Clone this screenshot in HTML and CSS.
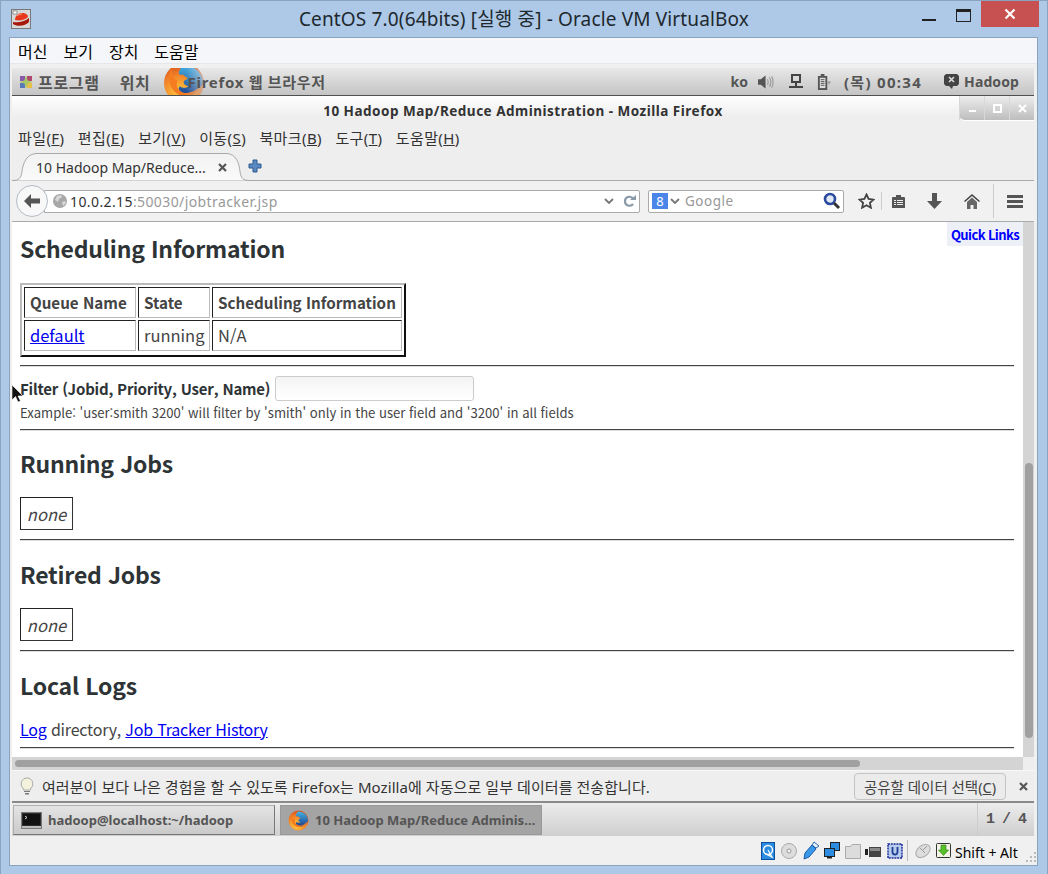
FILE: index.html
```html
<!DOCTYPE html>
<html lang="ko">
<head>
    <meta charset="utf-8">
    <title>CentOS 7.0(64bits) [실행 중] - Oracle VM VirtualBox</title>
    <link rel="stylesheet" href="styles.css">
</head>
<body>
    <svg class="defs" width="0" height="0">
        <defs>
            <radialGradient id="fx-orange" cx="0.4" cy="0.75" r="0.8">
                <stop offset="0" stop-color="#ffd040"/>
                <stop offset="0.55" stop-color="#f2842a"/>
                <stop offset="1" stop-color="#d0481c"/>
            </radialGradient>
            <linearGradient id="fx-blue" x1="0" y1="0" x2="0" y2="1">
                <stop offset="0" stop-color="#44b0e4"/>
                <stop offset="1" stop-color="#1c3f8c"/>
            </linearGradient>
            <symbol id="firefox" viewBox="0 0 40 40">
                <circle cx="20" cy="20" r="19" fill="url(#fx-orange)"/>
                <path d="M20 3c9 0 17 7 18 15 .5 6-3 5-6 9-3 5-9 6-13 4-4-2-5-6-3-8 3 2 6 2 8 0-3-1-5-2-4-5 1-1 4-1 3-3-2-1-3-2-4-3-2 1-4 0-4-2 1-3 3-7 5-7z" fill="url(#fx-blue)"/>
                <path d="M8 6c-1 3-3 7-2 11 1 11 10 18 19 15 4-1 7-4 8-7-4 4-11 6-16 3-4-3-5-7-3-11-3 1-5-2-6-11z" fill="#f57c20"/>
            </symbol>
            <symbol id="chevron" viewBox="0 0 10 6">
                <path d="M1 1l4 4 4-4" fill="none" stroke="#777" stroke-width="1.8"/>
            </symbol>
        </defs>
    </svg>

    <header class="vbox-title">
        <svg class="vbox-logo" width="20" height="20" viewBox="0 0 20 20">
            <rect x="0.5" y="0.5" width="19" height="19" fill="#d8d8d8" stroke="#777"/>
            <path d="M2 13c5 1 11 0 16-4l0 4c-3 4-12 5-16 2z" fill="#a81808"/>
            <path d="M4 11c0-4 3-7 7-7 4 0 6 2 6 4-3 3-8 4-13 3z" fill="#e8381c"/>
            <path d="M6 7c1-1 3-2 5-2" fill="none" stroke="#f8a080"/>
            <rect x="2" y="2" width="4" height="3" fill="#fff" stroke="#444" stroke-width="0.5"/>
        </svg>
        <h1 class="vbox-name">CentOS 7.0(64bits) [실행 중] - Oracle VM VirtualBox</h1>
        <div class="vbox-controls">
            <span class="ctl-min"></span>
            <span class="ctl-max"></span>
            <span class="ctl-close">
                <svg width="12" height="12" viewBox="0 0 12 12"><path d="M1.5 1.5l9 9M10.5 1.5l-9 9" stroke="#fff" stroke-width="2.2"/></svg>
            </span>
        </div>
    </header>

    <div class="vbox-body">
        <nav class="vm-menu">
            <span>머신</span><span>보기</span><span>장치</span><span>도움말</span>
        </nav>

        <div class="guest">
            <div class="gnome-panel">
                <svg class="foot" width="14" height="14" viewBox="0 0 14 14">
                    <rect x="1" y="1" width="5" height="5" fill="#8a5aa8"/>
                    <rect x="8" y="1" width="5" height="5" fill="#b04a6c"/>
                    <rect x="1" y="8" width="5" height="5" fill="#5a78b8"/>
                    <rect x="8" y="8" width="5" height="5" fill="#e4c04a"/>
                    <path d="M7 0l2 7-2 7-2-7zM0 7l7-2 7 2-7 2z" fill="#a8c868"/>
                </svg>
                <span class="panel-item apps">프로그램</span>
                <span class="panel-item places">위치</span>
                <svg class="panel-logo" width="42" height="42"><use href="#firefox"/></svg>
                <span class="panel-item app-name">Firefox 웹 브라우저</span>

                <div class="panel-right">
                    <span class="panel-item lang">ko</span>
                    <svg class="p-vol" width="17" height="14" viewBox="0 0 18 14">
                        <path d="M0 4h3l5-4v14l-5-4H0z" fill="#555"/>
                        <path d="M10 4c1 2 1 4 0 6M12 2c2 3 2 7 0 10M14.500 1c2 4 2 8 0 12" fill="none" stroke="#999" stroke-width="1.200"/>
                    </svg>
                    <svg class="p-net" width="14" height="16" viewBox="0 0 14 16">
                        <path d="M2 0h10v9H2zM4 2v5h6V2z" fill="#444" fill-rule="evenodd"/>
                        <path d="M6 9h2v3h6v2H0v-2h6z" fill="#444"/>
                    </svg>
                    <svg class="p-bat" width="14" height="16" viewBox="0 0 15 17">
                        <path d="M4 0h4v2h3v15H1V2h3z" fill="#555"/>
                        <path d="M3 4h6v11H3z" fill="#ddd"/>
                        <path d="M4 6h4M4 8h4M4 10h4M4 12h4" stroke="#555"/>
                        <path d="M12 8l3 0-3 5 1-3h-2z" fill="#999"/>
                    </svg>
                    <span class="panel-item clock">(목) 00:34</span>
                    <svg class="p-chat" width="15" height="15" viewBox="0 0 15 15">
                        <path d="M2 0h11l2 2v8l-2 2H9l-1 3-3-3H2L0 10V2z" fill="#444"/>
                        <path d="M5 3l5 5M10 3l-5 5" stroke="#ddd" stroke-width="1.600"/>
                    </svg>
                    <span class="panel-item user">Hadoop</span>
                </div>
            </div>

            <div class="ff-title">
                <span class="ff-name">10 Hadoop Map/Reduce Administration - Mozilla Firefox</span>
                <div class="ff-controls">
                    <span class="ff-btn"><i class="g-min"></i></span>
                    <span class="ff-btn"><i class="g-max"></i></span>
                    <span class="ff-btn">
                        <svg width="9" height="9" viewBox="0 0 9 9"><path d="M1 1l7 7M8 1l-7 7" stroke="#fff" stroke-width="2"/></svg>
                    </span>
                </div>
            </div>

            <nav class="ff-menu">
                <span>파일(<u>F</u>)</span><span>편집(<u>E</u>)</span><span>보기(<u>V</u>)</span><span>이동(<u>S</u>)</span><span>북마크(<u>B</u>)</span><span>도구(<u>T</u>)</span><span>도움말(<u>H</u>)</span>
            </nav>

            <div class="ff-tabs">
                <div class="ff-tab">
                    <svg class="tab-shape" width="238" height="30" viewBox="0 0 238 30">
                        <defs>
                            <linearGradient id="tab-fill" x1="0" y1="0" x2="0" y2="1">
                                <stop offset="0" stop-color="#f2f2f2"/>
                                <stop offset="1" stop-color="#fafafa"/>
                            </linearGradient>
                        </defs>
                        <path d="M0 29.500c7 0 9-2 10-9 1-9 5-18 15-18h189c10 0 13 9 14 18 1 7 3 9 10 9" fill="url(#tab-fill)" stroke="#aaa"/>
                    </svg>
                    <span class="tab-label">10 Hadoop Map/Reduce...</span>
                    <svg class="tab-close" width="9" height="9" viewBox="0 0 9 9"><path d="M1 1l7 7M8 1l-7 7" stroke="#555" stroke-width="2.200"/></svg>
                </div>
                <svg class="tab-new" width="14" height="14" viewBox="0 0 14 14">
                    <path d="M5 1h4v4h4v4H9v4H5V9H1V5h4z" fill="#5a88c0" stroke="#2c5a94"/>
                </svg>
            </div>

            <div class="ff-nav">
                <div class="back-btn">
                    <svg width="16" height="14" viewBox="0 0 16 14"><path d="M7 0L0 7l7 7V9.500h9v-5H7z" fill="#555"/></svg>
                </div>
                <div class="url-bar">
                    <svg class="globe" width="14" height="14" viewBox="0 0 14 14">
                        <circle cx="7" cy="7" r="7" fill="#a8a8a8"/>
                        <path d="M4 2l4-1 1 2-3 2-1 3-3-2zM9 8l3-1 1 2-3 3z" fill="#d8d8d8"/>
                    </svg>
                    <span class="url"><b>10.0.2.15</b>:50030/jobtracker.jsp</span>
                    <svg class="url-drop" width="10" height="6"><use href="#chevron"/></svg>
                    <svg class="url-reload" width="13" height="12" viewBox="0 0 13 12">
                        <path d="M10 3.500A4.500 4.500 0 1 0 10 9" fill="none" stroke="#8a9aa8" stroke-width="2.200"/>
                        <path d="M7 5h6V0z" fill="#8a9aa8"/>
                    </svg>
                </div>
                <div class="search-bar">
                    <span class="engine">8</span>
                    <svg class="engine-drop" width="10" height="6"><use href="#chevron"/></svg>
                    <span class="search-hint">Google</span>
                    <svg class="mag" width="18" height="18" viewBox="0 0 18 18">
                        <circle cx="7" cy="7" r="5" fill="#dfe8f4" stroke="#2a4a9c" stroke-width="2.600"/>
                        <path d="M11 11l5 5" stroke="#333" stroke-width="3"/>
                    </svg>
                </div>
                <div class="nav-tools">
                    <svg class="t-star" width="17" height="16" viewBox="0 0 17 16"><path d="M8.500 1.500l2.100 4.500 4.900.6-3.600 3.300 1 4.800-4.400-2.500-4.400 2.500 1-4.800L1.500 6.600l4.900-.6z" fill="none" stroke="#444" stroke-width="1.800"/></svg>
                    <i class="t-sep"></i>
                    <svg class="t-clip" width="15" height="15" viewBox="0 0 15 15">
                        <path d="M5 1h5v2h3a1 1 0 0 1 1 1v10H1V4a1 1 0 0 1 1-1h3z" fill="#555"/>
                        <path d="M3 6h2v1H3zM6 6h6v1H6zM3 8h2v1H3zM6 8h6v1H6zM3 10h2v1H3zM6 10h6v1H6z" fill="#eee"/>
                    </svg>
                    <svg class="t-down" width="15" height="16" viewBox="0 0 15 16"><path d="M5 0h5v8h5l-7.500 8L0 8h5z" fill="#555"/></svg>
                    <svg class="t-home" width="16" height="15" viewBox="0 0 16 15"><path d="M8 0l8 7-1 1-7-6-7 6-1-1z" fill="#444"/><path d="M8 3.500l5 4.500v7H9.500v-4h-3v4H3V8z" fill="#666"/></svg>
                    <i class="t-sep tall"></i>
                    <div class="t-menu"><i></i><i></i><i></i></div>
                </div>
            </div>

            <div class="viewport">
                <main class="page">
                    <a class="quick-links">Quick Links</a>

                    <h2>Scheduling Information</h2>
                    <table class="queues">
                        <tr>
                            <th class="c-name">Queue Name</th>
                            <th class="c-state">State</th>
                            <th>Scheduling Information</th>
                        </tr>
                        <tr>
                            <td><a href="#">default</a></td>
                            <td>running</td>
                            <td>N/A</td>
                        </tr>
                    </table>
                    <hr class="after-table">

                    <form class="filter">
                        <label for="filter">Filter (Jobid, Priority, User, Name)</label>
                        <input type="text" id="filter">
                    </form>
                    <p class="hint">Example: 'user:smith 3200' will filter by 'smith' only in the user field and '3200' in all fields</p>
                    <hr>

                    <h2>Running Jobs</h2>
                    <div class="none-box">none</div>
                    <hr class="after-none">

                    <h2>Retired Jobs</h2>
                    <div class="none-box">none</div>
                    <hr class="after-none">

                    <h2>Local Logs</h2>
                    <p class="logs"><a href="#">Log</a> directory, <a href="#">Job Tracker History</a></p>
                    <hr class="after-logs">
                </main>
                <div class="v-scroll"><i></i></div>
            </div>
            <div class="h-scroll"><div class="h-track"><i></i></div><div class="h-corner"></div></div>

            <div class="notice">
                <svg class="bulb" width="14" height="18" viewBox="0 0 14 18">
                    <path d="M7 1a6 6 0 0 1 3.500 10.800V13h-7v-1.200A6 6 0 0 1 7 1z" fill="#f4f2dc" stroke="#aaa"/>
                    <path d="M4 14h6v1H4zM5 16h4v1.500H5z" fill="#777"/>
                </svg>
                <span class="notice-text">여러분이 보다 나은 경험을 할 수 있도록 Firefox는 Mozilla에 자동으로 일부 데이터를 전송합니다.</span>
                <button class="notice-btn" type="button">공유할 데이터 선택(<u>C</u>)</button>
                <svg class="notice-close" width="9" height="9" viewBox="0 0 9 9"><path d="M1 1l7 7M8 1l-7 7" stroke="#555" stroke-width="2.200"/></svg>
            </div>

            <div class="taskbar">
                <div class="task">
                    <svg width="21" height="17" viewBox="0 0 21 17">
                        <rect x="0.500" y="0.500" width="20" height="16" fill="#2c2c2c" stroke="#777"/>
                        <rect x="2" y="2" width="17" height="11" fill="#111"/>
                        <path d="M4 4l2 1.500L4 7" fill="none" stroke="#ddd"/>
                        <path d="M1 14h19v2H1z" fill="#bbb"/>
                    </svg>
                    <span>hadoop@localhost:~/hadoop</span>
                </div>
                <div class="task active">
                    <svg width="21" height="21"><use href="#firefox"/></svg>
                    <span>10 Hadoop Map/Reduce Adminis…</span>
                </div>
                <div class="pager">1 / 4</div>
            </div>
        </div>

        <footer class="vm-status">
            <svg class="s-hd" width="14" height="18" viewBox="0 0 14 18">
                <rect x="0.500" y="0.500" width="13" height="17" fill="#2c8ce0" stroke="#0c4ea0"/>
                <circle cx="7" cy="8" r="4.500" fill="none" stroke="#fff" stroke-width="1.500"/>
                <path d="M7 8l4 7-6-3" fill="none" stroke="#fff" stroke-width="1.200"/>
            </svg>
            <svg class="s-cd" width="16" height="16" viewBox="0 0 16 16">
                <circle cx="8" cy="8" r="7.500" fill="#ddd" stroke="#aaa"/>
                <circle cx="8" cy="8" r="2" fill="#f4f4f4" stroke="#999"/>
            </svg>
            <svg class="s-usb" width="17" height="19" viewBox="0 0 17 19">
                <path d="M11 1l5 4-3 2-4-3z" fill="#e8f0f8" stroke="#2a6ab0"/>
                <path d="M9 4l4 4-7 8-5 2 1-6z" fill="#3a98e8" stroke="#1a5aa8"/>
            </svg>
            <svg class="s-net" width="16" height="17" viewBox="0 0 16 17">
                <rect x="6.500" y="0.500" width="9" height="8" fill="#2c8ce0" stroke="#222"/>
                <rect x="0.500" y="6.500" width="10" height="8" fill="#2c8ce0" stroke="#222"/>
                <path d="M3 15h5v1.500H3z" fill="#222"/>
            </svg>
            <svg class="s-folder" width="16" height="15" viewBox="0 0 16 15">
                <path d="M.5 2.500h5l1.500-2h8.500v14H.5z" fill="#dcdcdc" stroke="#aaa"/>
            </svg>
            <svg class="s-cam" width="16" height="12" viewBox="0 0 16 12">
                <rect x="4" y="1" width="12" height="10" fill="#444"/>
                <rect x="5" y="2" width="10" height="3" fill="#888"/>
                <path d="M0 3h3v6H0z" fill="#222"/>
            </svg>
            <svg class="s-chip" width="16" height="16" viewBox="0 0 16 16">
                <rect x="1" y="1" width="14" height="14" fill="#b8ccec" stroke="#1c2c98" stroke-width="1.500" stroke-dasharray="2 0.800"/>
                <path d="M5.500 4v5a2.500 2.500 0 0 0 5 0V4" fill="none" stroke="#1c3c98" stroke-width="1.800"/>
            </svg>
            <i class="s-sep"></i>
            <svg class="s-mouse" width="16" height="16" viewBox="0 0 16 16">
                <ellipse cx="8" cy="8" rx="8" ry="5.500" transform="rotate(-40 8 8)" fill="#ddd" stroke="#aaa"/>
                <path d="M5 5l5 5M12 3L8 7" stroke="#999"/>
            </svg>
            <svg class="s-key" width="15" height="15" viewBox="0 0 15 15">
                <rect x="0.500" y="0.500" width="14" height="14" rx="1" fill="#f4f4e4" stroke="#333"/>
                <path d="M5 2h5v5h2.500l-5 5.500-5-5.500H5z" fill="#58c028" stroke="#2a7a10" stroke-width="0.600"/>
            </svg>
            <span class="host-key">Shift + Alt</span>
            <svg class="s-grip" width="10" height="10" viewBox="0 0 10 10">
                <path d="M8 0h2v2H8zM4 4h2v2H4zM8 4h2v2H8zM0 8h2v2H0zM4 8h2v2H4zM8 8h2v2H8z" fill="#bbb"/>
            </svg>
        </footer>
    </div>

    <svg class="pointer" width="12" height="18" viewBox="0 0 12 18">
        <path d="M0 0v15l3.500-3.500L6 17l2.500-1-2.500-5h5z" fill="#111" stroke="#fff" stroke-width="0.600"/>
    </svg>
</body>
</html>
```

FILE: styles.css
```css
* {
    box-sizing: border-box;
}
html, body {
    margin: 0;
    height: 874px;
    overflow: hidden;
}
body {
    position: relative;
    width: 1048px;
    background: #adc9e7;
    border: 1px solid #8ba3bf;
    border-bottom: 0;
    font-family: "Noto Sans", "Noto Sans CJK KR", sans-serif;
    display: flex;
    flex-direction: column;
    color: #2e3436;
}
.defs {
    display: block;
    height: 0;
}

/* VirtualBox window */
.vbox-title {
    position: relative;
    height: 36px;
    flex: none;
    display: flex;
    align-items: center;
    justify-content: center;
}
.vbox-logo {
    position: absolute;
    left: 10px;
    top: 8px;
}
.vbox-name {
    margin: 0 0 2px;
    font-size: 19px;
    font-weight: 400;
    letter-spacing: .15px;
    color: #20282e;
}
.vbox-controls {
    position: absolute;
    right: 8px;
    top: 0;
    display: flex;
    align-items: flex-start;
}
.ctl-min {
    width: 14px;
    height: 2px;
    margin: 18px 20px 0 0;
    background: #222;
}
.ctl-max {
    width: 15px;
    height: 13px;
    margin: 8px 10px 0 0;
    border: 1px solid #222;
    border-top-width: 3px;
}
.ctl-close {
    width: 58px;
    height: 26px;
    background: #c75050;
    display: flex;
    align-items: center;
    justify-content: center;
}
.vbox-body {
    width: 1029px;
    height: 829px;
    margin-left: 8px;
    background: #f0f0f0;
    border: 1px solid #8ba3bf;
    display: flex;
    flex-direction: column;
}
.vm-menu {
    height: 26px;
    flex: none;
    padding-left: 8px;
    background: #f5f6f9;
    border-bottom: 1px solid #e6e6e6;
    display: flex;
    gap: 16px;
    align-items: center;
    font-size: 16px;
    color: #000;
}
.guest {
    width: 1022px;
    height: 768px;
    margin: 4px 0 0 2px;
    flex: none;
    display: flex;
    flex-direction: column;
}
.vm-status {
    flex: 1;
    display: flex;
    align-items: center;
    position: relative;
}
.vm-status svg, .s-sep {
    position: absolute;
}
.s-hd { left: 751px; top: 6px; }
.s-cd { left: 771px; top: 7px; }
.s-usb { left: 793px; top: 5px; }
.s-net { left: 814px; top: 6px; }
.s-folder { left: 835px; top: 8px; }
.s-cam { left: 855px; top: 10px; }
.s-chip { left: 877px; top: 7px; }
.s-sep { left: 897px; top: 4px; width: 1px; height: 21px; background: #bbb; }
.s-mouse { left: 905px; top: 7px; }
.s-key { left: 926px; top: 7px; }
.s-grip { left: 1016px; top: 16px; }
.host-key {
    margin: 3px 0 0 945px;
    font-size: 14px;
    color: #000;
}

/* GNOME panel */
.gnome-panel {
    position: relative;
    height: 28px;
    flex: none;
    padding-left: 7px;
    background: linear-gradient(#e8e8e8, #c4c4c4);
    border-bottom: 1px solid #4f4f4f;
    display: flex;
    align-items: center;
    overflow: hidden;
    color: #555;
}
.panel-item {
    font-size: 16px;
    font-weight: 700;
    letter-spacing: .7px;
}
.apps { margin-left: 5px; }
.places { margin-left: 20px; }
.panel-logo {
    position: absolute;
    left: 151px;
    top: -6px;
    -webkit-mask-image: linear-gradient(to right, #000 55%, rgba(0, 0, 0, .3));
    mask-image: linear-gradient(to right, #000 55%, rgba(0, 0, 0, .3));
}
.app-name {
    position: relative;
    margin-left: 37px;
    font-size: 15px;
    letter-spacing: .7px;
    white-space: nowrap;
}
.panel-right {
    margin-left: auto;
    padding-right: 15px;
    display: flex;
    align-items: center;
}
.lang { font-size: 14px; letter-spacing: 0; }
.p-vol { margin-left: 10px; }
.p-net { margin-left: 14px; }
.p-bat { margin-left: 14px; }
.clock { margin-left: 13px; font-size: 15px; letter-spacing: 1.300px; }
.p-chat { margin-left: 22px; }
.user { margin-left: 5px; font-size: 14px; letter-spacing: .1px; }

/* Firefox chrome */
.ff-title {
    position: relative;
    height: 29px;
    flex: none;
    background: linear-gradient(#fff, #eee 70%);
    text-align: center;
    padding-top: 3px;
}
.ff-name {
    font-size: 13.500px;
    font-weight: 700;
    letter-spacing: .5px;
    color: #333;
}
.ff-controls {
    position: absolute;
    right: 0;
    top: 0;
    height: 25px;
    display: flex;
    background: linear-gradient(#ededed, #bdbdbd);
    border-radius: 0 0 0 6px;
    border-bottom: 1px solid #fff;
}
.ff-btn {
    width: 25px;
    display: flex;
    align-items: center;
    justify-content: center;
    border-left: 1px solid #d8d8d8;
}
.g-min {
    width: 7px;
    height: 2px;
    margin-top: 6px;
    background: #fff;
}
.g-max {
    width: 9px;
    height: 9px;
    border: 2px solid #fff;
}
.ff-menu {
    height: 25px;
    flex: none;
    padding-left: 6px;
    background: #eee;
    display: flex;
    gap: 13.400px;
    align-items: center;
    font-size: 15px;
    letter-spacing: .4px;
    color: #333;
}
.ff-tabs {
    height: 31px;
    flex: none;
    background: #eee;
    border-bottom: 1px solid #aaa;
    display: flex;
    align-items: flex-end;
}
.ff-tab {
    position: relative;
    width: 238px;
    height: 30px;
    margin-bottom: -1px;
    padding: 3px 0 0 24px;
    display: flex;
    align-items: center;
}
.tab-shape {
    position: absolute;
    left: 0;
    top: 0;
}
.tab-label {
    position: relative;
    font-size: 14px;
    color: #333;
}
.tab-close {
    position: absolute;
    left: 206px;
    top: 12px;
}
.tab-new {
    margin: 0 0 7px -2px;
}
.ff-nav {
    height: 41px;
    flex: none;
    background: #f1f1f1;
    border-bottom: 1px solid #aaa;
    display: flex;
    align-items: center;
    padding-left: 4px;
    position: relative;
}
.back-btn {
    position: relative;
    z-index: 1;
    width: 32px;
    height: 32px;
    border: 1px solid #b4bcc6;
    border-radius: 50%;
    background: #f8f8f8;
    display: flex;
    align-items: center;
    justify-content: center;
}
.url-bar {
    width: 596px;
    height: 23px;
    margin-left: -4px;
    padding-left: 8px;
    background: #fff;
    border: 1px solid #aaa;
    border-radius: 0 2px 2px 0;
    display: flex;
    align-items: center;
}
.globe {
    margin: 0 3px 0 0;
}
.url {
    flex: 1;
    font-size: 14px;
    letter-spacing: .4px;
    color: #999;
}
.url b {
    font-weight: 400;
    color: #333;
}
.url-reload {
    margin: 0 3px 0 9px;
}
.search-bar {
    width: 196px;
    height: 23px;
    margin-left: 8px;
    padding: 0 2px 0 3px;
    background: #fff;
    border: 1px solid #aaa;
    border-radius: 2px;
    display: flex;
    align-items: center;
}
.engine {
    width: 16px;
    height: 16px;
    background: #4a86e8;
    color: #fff;
    font-size: 13px;
    line-height: 16px;
    text-align: center;
}
.engine-drop {
    margin-left: 2px;
}
.search-hint {
    flex: 1;
    margin-left: 5px;
    font-size: 13.500px;
    letter-spacing: .5px;
    color: #999;
}
.nav-tools {
    display: flex;
    align-items: center;
    height: 100%;
}
.t-star { margin-left: 14px; }
.t-sep {
    width: 1px;
    height: 18px;
    margin-left: 6px;
    background: #ccc;
}
.t-sep.tall {
    height: 34px;
    margin-left: 13px;
}
.t-clip { margin-left: 9px; }
.t-down { margin-left: 21px; }
.t-home { margin-left: 22px; }
.t-menu {
    width: 16px;
    margin-left: 13px;
    display: flex;
    flex-direction: column;
    gap: 2px;
}
.t-menu i {
    height: 3px;
    background: #555;
}

/* page */
.viewport {
    height: 535px;
    flex: none;
    display: flex;
}
.page {
    position: relative;
    width: 1011px;
    padding: 11px 9px 0 8px;
    background: #fff;
    font-family: "Noto Sans CJK KR", sans-serif;
    font-size: 16.500px;
    color: #444;
    overflow: hidden;
}
.quick-links {
    position: absolute;
    right: 0;
    top: 0;
    width: 76px;
    height: 24px;
    background: #eef0f8;
    color: #00f !important;
    font-size: 13px;
    letter-spacing: -.6px;
    font-weight: 700;
    line-height: 26px;
    text-align: center;
    white-space: nowrap;
}
.page a {
    color: #00e;
}
.page h2 {
    margin: 0;
    font-size: 23px;
    letter-spacing: -.2px;
    line-height: 30px;
    font-weight: 700;
    color: #2e3436;
}
.page hr {
    height: 2px;
    margin: 0;
    border: 0;
    border-top: 1px solid #444;
    border-bottom: 1px solid #ddd;
}
.queues {
    width: 386px;
    margin-top: 20px;
    padding-bottom: 2px;
    border-collapse: separate;
    border-spacing: 2px;
    border: 2px solid;
    border-color: #bbb #111 #111 #bbb;
    table-layout: fixed;
    line-height: 20px;
}
.queues th, .queues td {
    height: 31px;
    padding: 0 5px 2px;
    border: 1px solid;
    border-color: #222 #bbb #bbb #222;
    text-align: left;
    font-size: 15.200px;
    white-space: nowrap;
}
.c-name { width: 112px; }
.c-state { width: 72px; }
.queues td {
    font-size: 16.500px;
}
.after-table {
    margin-top: 8px !important;
}
.filter {
    height: 25px;
    margin-top: 9px;
    display: flex;
    align-items: center;
    gap: 5px;
}
.filter label {
    font-size: 15px;
    letter-spacing: -.2px;
    font-weight: 700;
    color: #2e3436;
}
.filter input {
    width: 199px;
    height: 25px;
    border: 1px solid #ccc;
    border-radius: 3px;
    background: linear-gradient(#f4f4f4, #fff);
}
.hint {
    margin: 2px 0 6px;
    font-size: 13.100px;
    line-height: 20px;
}
.page hr + h2 {
    margin-top: 17px;
}
.page .after-none + h2 {
    margin-top: 18px;
}
.none-box {
    width: 53px;
    height: 33px;
    margin-top: 19px;
    border: 1px solid;
    border-color: #222 #333 #333 #222;
    font-style: italic;
    text-align: center;
    line-height: 33px;
}
.after-none {
    margin-top: 9px !important;
}
.logs {
    margin: 17px 0 0;
    font-size: 16px;
    letter-spacing: -.2px;
    line-height: 24px;
}
.after-logs {
    margin-top: 6px !important;
}
.v-scroll {
    width: 11px;
    padding: 241px 1px 0 2px;
    background: #d4d4d4;
}
.v-scroll i {
    display: block;
    height: 275px;
    border-radius: 4px;
    background: #a0a0a0;
}
.h-scroll {
    height: 13px;
    flex: none;
    display: flex;
}
.h-track {
    width: 1011px;
    padding: 3px 0 3px 3px;
    background: #d4d4d4;
}
.h-track i {
    display: block;
    width: 845px;
    height: 7px;
    border-radius: 4px;
    background: #a0a0a0;
}
.h-corner {
    flex: 1;
    background: #eee;
}

/* notification bar and window list */
.notice {
    height: 33px;
    flex: none;
    padding: 0 0 0 8px;
    background: #eee;
    border-top: 1px solid #f8f8f8;
    border-bottom: 2px solid #8a8a8a;
    display: flex;
    align-items: center;
    font-size: 15px;
    color: #333;
}
.notice-text {
    flex: 1;
    margin-left: 8px;
    letter-spacing: .07px;
}
.notice-btn {
    width: 152px;
    height: 27px;
    padding: 0;
    border: 1px solid #c4c4c4;
    border-radius: 4px;
    background: #ebebeb;
    font: inherit;
    font-size: 14.500px;
    color: #444;
}
.notice-close {
    margin: 0 6px 0 13px;
}
.taskbar {
    height: 33px;
    flex: none;
    padding: 2px 0 0 1px;
    background: linear-gradient(#ececec, #cfcfcf);
    display: flex;
    align-items: stretch;
}
.task {
    width: 262px;
    height: 30px;
    margin-right: 5px;
    padding-left: 7px;
    border: 1px solid #b0b0b0;
    border-right-color: #777;
    border-bottom-color: #777;
    background: linear-gradient(#e4e4e4, #cacaca);
    display: flex;
    align-items: center;
    gap: 6px;
    font-size: 13px;
    font-weight: 700;
    color: #555;
    white-space: nowrap;
}
.task svg {
    flex: none;
}
.task.active {
    padding-left: 7px;
    background: #a4a4a4;
    color: #555;
    border-color: #999;
}
.pager {
    margin-left: auto;
    width: 57px;
    margin-top: -2px;
    border-left: 1px solid #ccc;
    font-family: "Liberation Mono", monospace;
    font-size: 15px;
    letter-spacing: -1px;
    font-weight: 700;
    line-height: 33px;
    text-align: center;
    color: #555;
}
.pointer {
    position: absolute;
    left: 11px;
    top: 384px;
}
```
